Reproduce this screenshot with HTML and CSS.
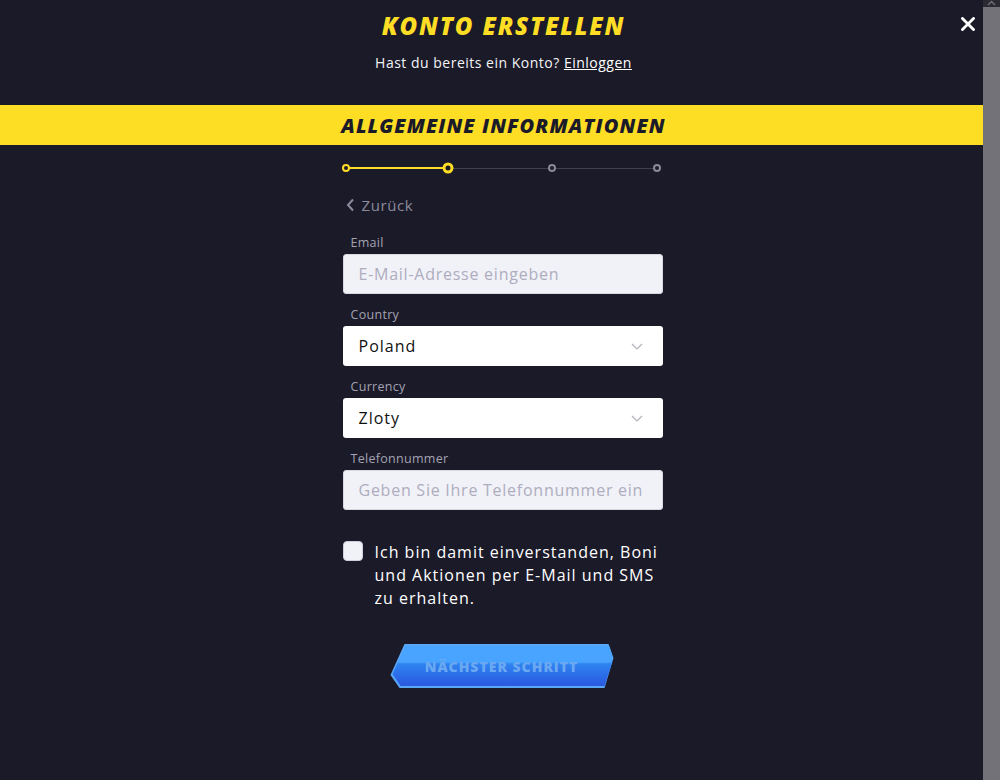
FILE: index.html
```html
<!DOCTYPE html>
<html>
<head>
    <meta charset="UTF-8">
    <title>Konto erstellen</title>
    <link rel="stylesheet" href="styles.css">
</head>
<body>
    <div class="page">
        <div class="modal">
            <button class="close" type="button">
                <svg width="14" height="14" viewBox="0 0 14 14"><path d="M1.5 1.5l11 11M12.5 1.5l-11 11" stroke="#fff" stroke-width="2.8" stroke-linecap="square"/></svg>
            </button>
            <div class="head">
                <h1>KONTO ERSTELLEN</h1>
                <p class="login">Hast du bereits ein Konto? <a href="#">Einloggen</a></p>
            </div>
            <div class="band"><h2>ALLGEMEINE INFORMATIONEN</h2></div>

            <div class="form">
                <div class="steps">
                    <span class="line done"></span>
                    <span class="line"></span>
                    <span class="line"></span>
                    <span class="dot d1 on"></span>
                    <span class="dot d2 current"></span>
                    <span class="dot d3"></span>
                    <span class="dot d4"></span>
                </div>

                <a class="back" href="#">
                    <svg width="9" height="14" viewBox="0 0 9 14"><path d="M7 1.5L2 7l5 5.5" fill="none" stroke="#8c8b9c" stroke-width="2"/></svg>
                    Zurück
                </a>

                <label class="field">
                    <span class="label">Email</span>
                    <input class="input" type="text" placeholder="E-Mail-Adresse eingeben">
                </label>
                <div class="field">
                    <span class="label">Country</span>
                    <div class="select">Poland <svg width="12" height="7" viewBox="0 0 12 7"><path d="M1 1l5 5 5-5" fill="none" stroke="#b4b3bd" stroke-width="1.2"/></svg></div>
                </div>
                <div class="field">
                    <span class="label">Currency</span>
                    <div class="select">Zloty <svg width="12" height="7" viewBox="0 0 12 7"><path d="M1 1l5 5 5-5" fill="none" stroke="#b4b3bd" stroke-width="1.2"/></svg></div>
                </div>
                <label class="field">
                    <span class="label">Telefonnummer</span>
                    <input class="input" type="text" placeholder="Geben Sie Ihre Telefonnummer ein">
                </label>

                <label class="agree">
                    <span class="box"></span>
                    <span class="agree-text">Ich bin damit einverstanden, Boni und Aktionen per E-Mail und SMS zu erhalten.</span>
                </label>

                <div class="submit">
                    <button class="next" type="button"><span>NÄCHSTER SCHRITT</span></button>
                </div>
            </div>
        </div>
        <div class="scrollbar">
            <div class="arrow">
                <svg width="9" height="6" viewBox="0 0 9 6"><path d="M1 5l3.5-3.5L8 5" fill="none" stroke="#6d6c76" stroke-width="1.5"/></svg>
            </div>
            <div class="thumb"></div>
        </div>
    </div>
</body>
</html>
```

FILE: styles.css
```css
html, body, h1, h2, p {margin: 0; padding: 0;}
body {background: #1b1a29; font-family: "Open Sans", "Noto Sans", sans-serif; color: #fff;}

.page {display: flex; height: 780px; overflow: hidden;}
.modal {flex: 1; position: relative; background: #1b1a29;}

.close {position: absolute; top: 17px; right: 8px; padding: 0; border: 0; background: none; line-height: 0; cursor: pointer;}

.head {padding: 11px 0 0 24px; text-align: center;}
h1 {font-size: 24px; line-height: 30px; font-weight: 800; font-style: italic; color: #fedd25; letter-spacing: 1.8px;}
.login {margin-top: 12px; font-size: 14px; line-height: 20px; font-weight: 500; color: #f4f4f6; letter-spacing: 0.5px;}
.login a {color: #fff; text-decoration: underline;}

.band {margin-top: 32px; height: 40px; background: #fedd25; display: flex; align-items: center; justify-content: center; padding-left: 24px;}
h2 {font-size: 20px; font-weight: 800; font-style: italic; color: #1b1a29; letter-spacing: 1.1px;}

.form {width: 320px; margin: 0 auto; padding: 17px 0 0 22px; display: flex; flex-direction: column;}

.steps {position: relative; height: 12px; display: flex; align-items: center; margin: 0 6px 0 3px;}
.steps .line {flex: 1; height: 1px; background: #41404f;}
.steps .line.done {background: #fedd25; height: 2px;}
.dot {position: absolute; top: 50%; width: 4px; height: 4px; border: 2px solid #8a8998; background: #1b1a29; border-radius: 50%; transform: translate(-50%, -50%);}
.dot.on {border-color: #fedd25;}
.dot.current {width: 5px; height: 5px; border: 3px solid #fedd25;}
.d1 {left: 0;}
.d2 {left: 33%;}
.d3 {left: 66.5%;}
.d4 {left: 100%;}

.back {margin-top: 21px; display: flex; align-items: center; gap: 7px; font-size: 15px; line-height: 20px; font-weight: 500; color: #8c8b9c; text-decoration: none; padding-left: 3px; letter-spacing: 0.6px;}

.field {display: flex; flex-direction: column; margin-top: 13px;}
.back + .field {margin-top: 20px;}
.label {font-size: 12.5px; line-height: 16px; color: #a4a3b2; padding-left: 8px; margin-bottom: 3px; letter-spacing: 0.3px;}
.input {height: 40px; box-sizing: border-box; border: 1px solid #d8d7e2; border-radius: 3px; background: #f1f1f8; padding: 0 15px; font: 16px "Open Sans", "Noto Sans", sans-serif; letter-spacing: 0.75px; color: #222; outline: none;}
.input::placeholder {color: #aeadbe;}
.select {height: 40px; box-sizing: border-box; border-radius: 3px; background: #fff; padding: 0 20px 0 16px; display: flex; align-items: center; justify-content: space-between; font-size: 16px; font-weight: 500; color: #111; letter-spacing: 1px;}

.agree {margin-top: 31px; display: flex; gap: 12px; cursor: pointer;}
.box {flex: none; width: 20px; height: 20px; margin-top: 0; border-radius: 4px; background: #f1f1f8; box-sizing: border-box; border: 1px solid #cfcedb;}
.agree-text {width: 290px; font-size: 16px; line-height: 23px; font-weight: 500; color: #fff; letter-spacing: 1px;}

.submit {margin-top: 34px; display: flex; justify-content: center; padding-right: 2px;}
.next {width: 224px; height: 44px; padding: 2px; border: 0; cursor: pointer;
    background: #5aa6f7;
    clip-path: polygon(15px 0, 219px 0, 224px 14px, 215px 44px, 10px 44px, 1px 31px);}
.next span {display: flex; align-items: center; justify-content: center; height: 100%;
    background: linear-gradient(#48a4ff 0, #48a4ff 40%, #2f83f0 45%, #2c6fea 70%, #2a58df 100%);
    clip-path: polygon(14px 0, 218px 0, 222px 13px, 213px 40px, 9px 40px, 1px 28px);
    font: 800 14px "Open Sans", "Noto Sans", sans-serif; color: #6aa9f2; letter-spacing: 1px;}

.scrollbar {width: 17px; display: flex; flex-direction: column; background: #2b2a33;}
.scrollbar .arrow {height: 7px; display: flex; justify-content: center; align-items: flex-start; overflow: hidden;}
.scrollbar .thumb {flex: 1; background: #747279;}
```
